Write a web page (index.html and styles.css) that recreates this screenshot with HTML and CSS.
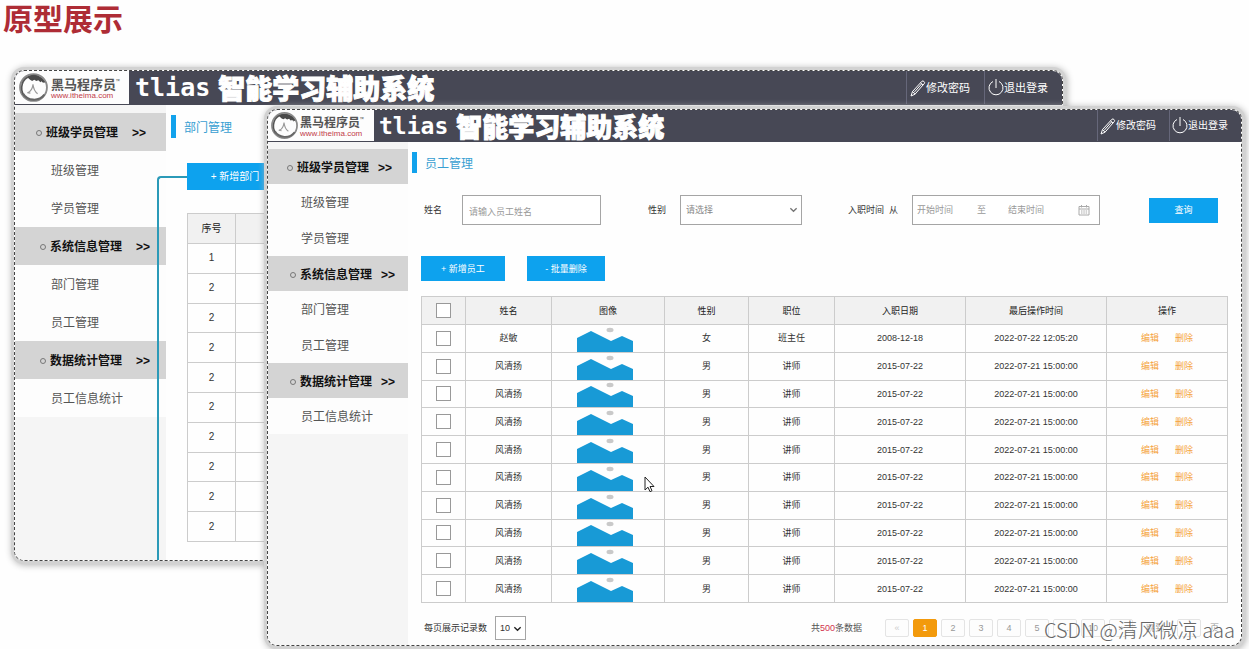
FILE: index.html
```
<!DOCTYPE html>
<html lang="zh-CN">
<head>
<meta charset="utf-8">
<title>原型展示</title>
<link rel="stylesheet" href="styles.css">
</head>
<body>
<svg class="defs" aria-hidden="true">
  <symbol id="horse" viewBox="0 0 30 30">
    <circle cx="15" cy="15" r="13" fill="#fdfdfd" stroke="#8a8a8a" stroke-width="1.800"/>
    <path d="M6 23C1 16 4 6 12 4c5-1.500 11 1 13.500 6" fill="none" stroke="#555" stroke-width="1.600"/>
    <path d="M9 5c6-4 15-1 17.500 6l-2-2 .2 2-2-2-1 1-2-2-2 .8-2-1.200-2 1-2-1z" fill="#4a4a4a"/>
    <path d="M5 21c4 7 15 8 20.500 1" fill="none" stroke="#666" stroke-width="2"/>
    <path d="M9.500 20c3-1 4.500-4 5-8 .5 4 1.500 7 4.500 9M9 20l3 .500" fill="none" stroke="#999" stroke-width="1.100"/>
  </symbol>
  <symbol id="pencil" viewBox="0 0 16 18">
    <path d="M1 17l1.500-4.500L12 2.200c1-1 3.400 1 2.400 2.200L5 15.200zM2.500 12.500L5 15.200M10.500 3.800l2.600 2.300M11.600 4.900L4 13.500" fill="none" stroke="currentColor" stroke-width="1"/>
  </symbol>
  <symbol id="power" viewBox="0 0 16 18">
    <path d="M5 2.500a7 7 0 1 0 6 0M8 0v9" fill="none" stroke="currentColor" stroke-width="1"/>
  </symbol>
  <symbol id="hills" viewBox="0 0 56 25">
    <ellipse cx="33" cy="3" rx="3.500" ry="2.200" fill="#c9c9c9"/>
    <path d="M0 11L14 4l20 10 11-5 11 5v11H0z" fill="#189ad6"/>
  </symbol>
  <symbol id="chevron" viewBox="0 0 10 6">
    <path d="M1.500 1L5 4.500 8.500 1" fill="none" stroke="currentColor" stroke-width="1.500"/>
  </symbol>
</svg>

<h1 class="headline">原型展示</h1>

<main class="canvas">
  <section class="window window-back">
    <header class="topbar">
      <div class="logo">
        <svg class="logo-mark"><use href="#horse"/></svg>
        <div class="logo-text"><b>黑马程序员<sup>™</sup></b><span>www.itheima.com</span></div>
      </div>
      <h2 class="system-name">tlias <span>智能学习辅助系统</span></h2>
      <nav class="account">
        <a href="#"><svg class="icon"><use href="#pencil"/></svg>修改密码</a>
        <a href="#"><svg class="icon"><use href="#power"/></svg>退出登录</a>
      </nav>
    </header>
    <div class="body">
      <nav class="sidebar">
        <div class="group first"><i></i>班级学员管理<span>&gt;&gt;</span></div>
        <a href="#">班级管理</a>
        <a href="#">学员管理</a>
        <div class="group"><i></i>系统信息管理<span>&gt;&gt;</span></div>
        <a href="#">部门管理</a>
        <a href="#">员工管理</a>
        <div class="group"><i></i>数据统计管理<span>&gt;&gt;</span></div>
        <a href="#">员工信息统计</a>
      </nav>
      <div class="content">
        <h3 class="page-title">部门管理</h3>
        <button class="btn add-dept" type="button">+ 新增部门</button>
        <table class="grid dept">
          <thead><tr><th class="no">序号</th><th></th></tr></thead>
          <tbody>
            <tr><td>1</td><td></td></tr>
            <tr><td>2</td><td></td></tr>
            <tr><td>2</td><td></td></tr>
            <tr><td>2</td><td></td></tr>
            <tr><td>2</td><td></td></tr>
            <tr><td>2</td><td></td></tr>
            <tr><td>2</td><td></td></tr>
            <tr><td>2</td><td></td></tr>
            <tr><td>2</td><td></td></tr>
            <tr><td>2</td><td></td></tr>
          </tbody>
        </table>
      </div>
    </div>
    <div class="connector"></div>
  </section>

  <section class="window window-front">
    <header class="topbar">
      <div class="logo">
        <svg class="logo-mark"><use href="#horse"/></svg>
        <div class="logo-text"><b>黑马程序员<sup>™</sup></b><span>www.itheima.com</span></div>
      </div>
      <h2 class="system-name">tlias <span>智能学习辅助系统</span></h2>
      <nav class="account">
        <a href="#"><svg class="icon"><use href="#pencil"/></svg>修改密码</a>
        <a href="#"><svg class="icon"><use href="#power"/></svg>退出登录</a>
      </nav>
    </header>
    <div class="body">
      <nav class="sidebar">
        <div class="group first"><i></i>班级学员管理<span>&gt;&gt;</span></div>
        <a href="#">班级管理</a>
        <a href="#">学员管理</a>
        <div class="group"><i></i>系统信息管理<span>&gt;&gt;</span></div>
        <a href="#">部门管理</a>
        <a href="#">员工管理</a>
        <div class="group"><i></i>数据统计管理<span>&gt;&gt;</span></div>
        <a href="#">员工信息统计</a>
      </nav>
      <div class="content">
        <h3 class="page-title">员工管理</h3>
        <form class="filters">
          <label for="name">姓名</label>
          <input class="field name" id="name" type="text" placeholder="请输入员工姓名">
          <label for="gender">性别</label>
          <span class="select gender">
            <select class="field" id="gender"><option>请选择</option><option>男</option><option>女</option></select>
            <svg><use href="#chevron"/></svg>
          </span>
          <label for="from">入职时间&nbsp; 从</label>
          <span class="range field">
            <input id="from" type="text" placeholder="开始时间">
            <label for="to">至</label>
            <input id="to" type="text" placeholder="结束时间">
            <svg class="calendar" viewBox="0 0 12 12"><path d="M1 2.500h10v8.500H1zM1 5h10M3.500 1v2.500M8.500 1v2.500M3 7h1.500M5.300 7h1.500M7.600 7h1.500M3 9h1.500M5.300 9h1.500M7.600 9h1.500" fill="none" stroke="#aaa"/></svg>
          </span>
          <button class="btn search" type="button">查询</button>
        </form>
        <div class="actions">
          <button class="btn add" type="button">+ 新增员工</button>
          <button class="btn remove" type="button">- 批量删除</button>
        </div>
        <table class="grid staff">
          <colgroup><col class="c-check"><col class="c-name"><col class="c-pic"><col class="c-sex"><col class="c-job"><col class="c-date"><col class="c-time"><col class="c-ops"></colgroup>
          <thead><tr><th><input type="checkbox" aria-label="全选"></th><th>姓名</th><th>图像</th><th>性别</th><th>职位</th><th>入职日期</th><th>最后操作时间</th><th>操作</th></tr></thead>
          <tbody>
            <tr><td><input type="checkbox" aria-label="选择"></td><td>赵敏</td><td class="pic"><svg><use href="#hills"/></svg></td><td>女</td><td>班主任</td><td>2008-12-18</td><td>2022-07-22 12:05:20</td><td class="ops"><a href="#">编辑</a><a href="#">删除</a></td></tr>
            <tr><td><input type="checkbox" aria-label="选择"></td><td>风清扬</td><td class="pic"><svg><use href="#hills"/></svg></td><td>男</td><td>讲师</td><td>2015-07-22</td><td>2022-07-21 15:00:00</td><td class="ops"><a href="#">编辑</a><a href="#">删除</a></td></tr>
            <tr><td><input type="checkbox" aria-label="选择"></td><td>风清扬</td><td class="pic"><svg><use href="#hills"/></svg></td><td>男</td><td>讲师</td><td>2015-07-22</td><td>2022-07-21 15:00:00</td><td class="ops"><a href="#">编辑</a><a href="#">删除</a></td></tr>
            <tr><td><input type="checkbox" aria-label="选择"></td><td>风清扬</td><td class="pic"><svg><use href="#hills"/></svg></td><td>男</td><td>讲师</td><td>2015-07-22</td><td>2022-07-21 15:00:00</td><td class="ops"><a href="#">编辑</a><a href="#">删除</a></td></tr>
            <tr><td><input type="checkbox" aria-label="选择"></td><td>风清扬</td><td class="pic"><svg><use href="#hills"/></svg></td><td>男</td><td>讲师</td><td>2015-07-22</td><td>2022-07-21 15:00:00</td><td class="ops"><a href="#">编辑</a><a href="#">删除</a></td></tr>
            <tr><td><input type="checkbox" aria-label="选择"></td><td>风清扬</td><td class="pic"><svg><use href="#hills"/></svg></td><td>男</td><td>讲师</td><td>2015-07-22</td><td>2022-07-21 15:00:00</td><td class="ops"><a href="#">编辑</a><a href="#">删除</a></td></tr>
            <tr><td><input type="checkbox" aria-label="选择"></td><td>风清扬</td><td class="pic"><svg><use href="#hills"/></svg></td><td>男</td><td>讲师</td><td>2015-07-22</td><td>2022-07-21 15:00:00</td><td class="ops"><a href="#">编辑</a><a href="#">删除</a></td></tr>
            <tr><td><input type="checkbox" aria-label="选择"></td><td>风清扬</td><td class="pic"><svg><use href="#hills"/></svg></td><td>男</td><td>讲师</td><td>2015-07-22</td><td>2022-07-21 15:00:00</td><td class="ops"><a href="#">编辑</a><a href="#">删除</a></td></tr>
            <tr><td><input type="checkbox" aria-label="选择"></td><td>风清扬</td><td class="pic"><svg><use href="#hills"/></svg></td><td>男</td><td>讲师</td><td>2015-07-22</td><td>2022-07-21 15:00:00</td><td class="ops"><a href="#">编辑</a><a href="#">删除</a></td></tr>
            <tr><td><input type="checkbox" aria-label="选择"></td><td>风清扬</td><td class="pic"><svg><use href="#hills"/></svg></td><td>男</td><td>讲师</td><td>2015-07-22</td><td>2022-07-21 15:00:00</td><td class="ops"><a href="#">编辑</a><a href="#">删除</a></td></tr>
          </tbody>
        </table>
        <footer class="pager">
          <label for="size">每页展示记录数</label>
          <span class="select size">
            <select class="field" id="size"><option>10</option><option>20</option></select>
            <svg><use href="#chevron"/></svg>
          </span>
          <span class="total">共<em>500</em>条数据</span>
          <nav class="pages">
            <button type="button" class="prev">«</button>
            <button type="button" class="current">1</button>
            <button type="button">2</button>
            <button type="button">3</button>
            <button type="button">4</button>
            <button type="button">5</button>
            <button type="button">...</button>
            <button type="button">10</button>
            <button type="button">»</button>
            <label for="jump">跳到</label>
            <input id="jump" type="text">
            <span>页</span>
          </nav>
        </footer>
      </div>
    </div>
  </section>

  <svg class="cursor" viewBox="0 0 11 17"><path d="M1 1v13l3-2.800 2 4.500 2-1-2-4.200h4z" fill="#fff" stroke="#222"/></svg>
  <p class="watermark">CSDN @清风微凉 aaa</p>
</main>
</body>
</html>
```

FILE: styles.css
```
* { box-sizing: border-box; }

body {
  margin: 0;
  min-height: 100vh;
  position: relative;
  overflow: hidden;
  background: #fefefe;
  color: #333;
  font: 9px/14px "Liberation Sans", "Noto Sans CJK SC", sans-serif;
}

h1, h2, h3, p { margin: 0; }
a { color: inherit; text-decoration: none; }
button, input, select { font: inherit; color: inherit; border-radius: 0; }
.defs { position: absolute; width: 0; height: 0; }

.headline {
  padding: 0 3px;
  font: 700 30px/34px "Noto Sans CJK SC", sans-serif;
  color: #ae2c35;
}

/* windows on the canvas */
.window {
  position: absolute;
  display: flex;
  flex-direction: column;
  overflow: hidden;
  background: #fefefe;
  border: 1px dashed #444;
  border-radius: 10px;
  box-shadow: 0 0 0 3px #d2d2d2, 1px 1px 7px 3px #b0b0b0;
}
.window-back { top: 70px; left: 14px; right: 186px; }
.window-front { top: 109px; left: 267px; right: 7px; }

/* top bar */
.topbar {
  display: flex;
  align-items: stretch;
  height: 34px;
  background: #474855;
  border-bottom: 1px solid #474855;
  color: #fff;
}
.window-front .topbar { height: 32px; }
.logo {
  display: flex;
  align-items: center;
  gap: 2px;
  width: 114px;
  padding-left: 3px;
  background: #fdfdfd;
}
.logo-mark { width: 31px; height: 31px; }
.logo-text { display: flex; flex-direction: column; white-space: nowrap; }
.logo-text b { font: 700 13px/16px "Noto Sans CJK SC", sans-serif; color: #555; }
.logo-text sup { font-size: 5px; line-height: 5px; vertical-align: 6px; font-weight: 400; }
.logo-text span { font-size: 8px; line-height: 8px; color: #c23b48; }
.window-front .logo { width: 106px; gap: 1px; padding-left: 2px; }
.window-front .logo-mark { width: 29px; height: 29px; }
.window-front .logo-text b { font-size: 12px; }
.system-name {
  flex: 1;
  display: flex;
  align-items: center;
  gap: 8px;
  padding-left: 6px;
  white-space: nowrap;
  font: 700 25px/30px "DejaVu Sans Mono", monospace;
}
.system-name span {
  font: 900 27px/32px "Noto Sans CJK SC", sans-serif;
  -webkit-text-stroke: 1px #fff;
}
.window-front .system-name { padding-left: 5px; font-size: 23px; }
.window-front .system-name span { font-size: 26px; }
.account { display: flex; }
.account a {
  display: flex;
  align-items: center;
  width: 78px;
  padding-left: 3px;
  border-left: 1px solid #66677a;
  font-size: 11px;
  white-space: nowrap;
}
.icon { width: 16px; height: 18px; flex: none; }
.window-front .account a { width: 72px; padding-left: 2px; font-size: 10px; }

/* side menu */
.body { display: flex; flex: 1; }
.sidebar {
  width: 151px;
  flex: none;
  padding-top: 8px;
  background: #f5f5f5;
  font-size: 12px;
}
.sidebar a {
  display: flex;
  align-items: center;
  height: 38px;
  padding: 2px 0 0 36px;
  background: #fdfdfd;
  color: #555;
}
.group {
  display: flex;
  align-items: center;
  height: 38px;
  padding: 2px 0 0 25px;
  background: #d4d4d4;
  color: #111;
  font-weight: 700;
}
.group.first { padding-left: 21px; }
.group i { width: 6px; height: 6px; margin-right: 4px; border: 1px solid #777; border-radius: 50%; }
.group span { margin-left: 14px; }
.window-front .sidebar { width: 140px; padding-top: 7px; }
.window-front .sidebar a { height: 36px; padding-left: 33px; }
.window-front .group { height: 35px; padding-left: 22px; }
.window-front .group.first { padding-left: 19px; }
.window-front .group span { margin-left: 9px; }

/* content */
.content { flex: 1; min-width: 0; padding: 10px 14px 18px 5px; }
.page-title {
  padding: 3px 0 0 8px;
  border-left: 5px solid #12a2ec;
  font-size: 12px;
  font-weight: 400;
  line-height: 20px;
  color: #389fd2;
}
.window-front .content { padding: 10px 13px 5px 4px; }
.window-front .page-title { line-height: 18px; }
.btn {
  height: 25px;
  padding: 0;
  border: 0;
  background: #0da2ee;
  color: #fff;
  text-align: center;
}
.add-dept { display: block; width: 96px; height: 27px; margin: 25px 0 23px 16px; font-size: 10px; }

.grid { border-collapse: collapse; table-layout: fixed; }
.grid th, .grid td { padding: 0; border: 1px solid #ccc; text-align: center; font-weight: 400; }
.grid th { background: #f1f1f1; color: #222; }
.dept { width: calc(100% - 16px); height: 329px; margin-left: 16px; }
.dept td { height: 29px; font-size: 10px; }
.dept th { height: 30px; font-size: 10px; }
.dept .no { width: 48px; }
.connector {
  position: absolute;
  top: 105px;
  left: 142px;
  bottom: 0;
  width: 30px;
  border: solid #2b9ab8;
  border-width: 2px 0 0 2px;
  border-top-left-radius: 4px;
}

.filters { display: flex; align-items: center; margin-top: 22px; padding-left: 12px; }
.field { height: 30px; border: 1px solid #a5a5a5; background: #fff; color: #888; }
.filters input::placeholder { color: #999; opacity: 1; }
.name { width: 139px; margin: 0 47px 0 20px; padding: 3px 6px 0; }
.select { position: relative; display: flex; }
.select select { width: 100%; appearance: none; padding: 0 16px 0 5px; outline: 0; }
.select svg { position: absolute; right: 4px; top: 12px; width: 9px; height: 6px; pointer-events: none; }
.gender { width: 122px; margin: 0 46px 0 14px; color: #777; }
.range { display: flex; align-items: center; width: 188px; margin-left: 14px; padding: 0 9px 0 4px; }
.range input { width: 60px; padding: 0; border: 0; background: none; }
.range label { margin-right: 22px; color: #999; }
.range .calendar { width: 12px; height: 12px; margin-left: auto; }
.search { width: 69px; margin-left: auto; margin-right: 10px; }

.actions { display: flex; gap: 22px; margin: 31px 0 15px 9px; }
.add { width: 84px; }
.remove { width: 78px; }

.staff { width: calc(100% - 9px); height: 307px; margin-left: 9px; }
.staff td { height: 27px; }
.staff th { height: 28px; }
.c-check { width: 44px; }
.c-name { width: 86px; }
.c-pic { width: 113px; }
.c-sex { width: 84px; }
.c-job { width: 86px; }
.c-date { width: 131px; }
.c-time { width: 141px; }
.staff input {
  display: block;
  width: 15px;
  height: 15px;
  margin: 0 auto;
  appearance: none;
  border: 1px solid #999;
  background: #fff;
}
.staff .pic { padding-right: 6px; vertical-align: bottom; }
.pic svg { display: block; width: 56px; height: 25px; margin: 0 auto; }
.ops a { color: #f5a33c; }
.ops a + a { margin-left: 16px; }

.pager { display: flex; align-items: center; margin-top: 13px; padding-left: 12px; }
.size { width: 31px; margin-left: 8px; color: #222; }
.size select { height: 24px; padding: 0 15px 0 4px; color: #333; }
.size svg { top: 10px; }
.total { margin-left: auto; margin-right: 23px; color: #555; }
.total em { font-style: normal; color: #d2334c; }
.pages { display: flex; align-items: center; gap: 4px; padding-right: 9px; color: #999; }
.pages button, .pages input {
  width: 24px;
  height: 18px;
  padding: 0;
  border: 1px solid #e4e4e4;
  border-radius: 2px;
  background: #fdfdfd;
}
.pages .prev { color: #ccc; }
.pages .current { border-color: #f39a0c; background: #f39a0c; color: #fff; }
.pages label { margin: 0 9px; }
.pages span { margin-left: 5px; }

/* overlays */
.cursor { position: absolute; left: 644px; top: 476px; width: 11px; height: 17px; }
.watermark {
  position: absolute;
  right: 14px;
  bottom: 6px;
  font: 300 20px/26px "Noto Sans CJK SC", sans-serif;
  color: #666;
  text-shadow: 1px 1px 0 #fff;
}
```
